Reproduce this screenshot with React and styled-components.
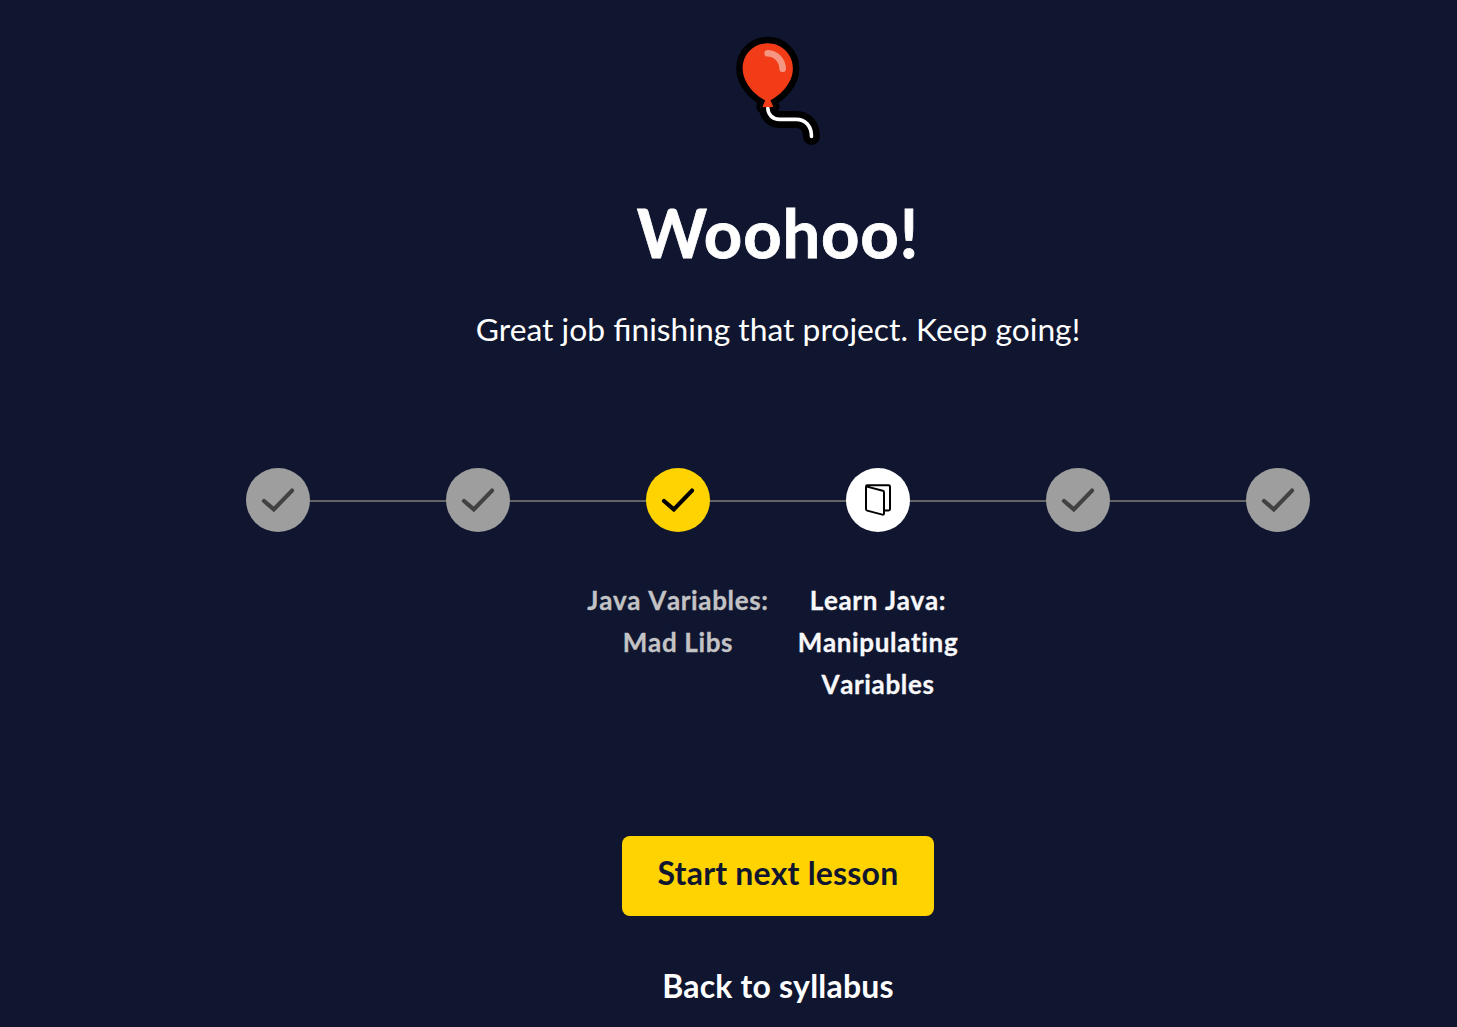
import React from "react";
import styled, { createGlobalStyle } from "styled-components";

const GlobalStyle = createGlobalStyle`
  body {
    margin: 0;
    background: #10162f;
    overflow: hidden;
  }
  * {
    box-sizing: border-box;
  }
`;

const Page = styled.main`
  display: flex;
  flex-direction: column;
  align-items: center;
  width: 1457px;
  height: 1027px;
  padding: 33px 0 0 99px;
  overflow: hidden;
  background: #10162f;
  color: #fff;
  font-family: Lato, "Open Sans", sans-serif;
`;

const Balloon = styled.svg`
  display: block;
  flex: none;
  width: 92px;
  height: 116px;
`;

const Title = styled.h1`
  margin: 43px 0 0;
  font-size: 67px;
  line-height: 80px;
  font-weight: 700;
  letter-spacing: 0.8px;
  -webkit-text-stroke: 0.8px #fff;
  white-space: nowrap;
`;

const Message = styled.p`
  margin: 33px 0 0;
  font-size: 31.8px;
  line-height: 48px;
  white-space: nowrap;
`;

const Steps = styled.ol`
  display: flex;
  margin: 115px 0 0;
  padding: 0;
  list-style: none;
`;

const Step = styled.li`
  display: flex;
  flex-direction: column;
  align-items: center;
  width: 200px;
  height: 240px;
`;

const Track = styled.div`
  display: flex;
  align-items: center;
  width: 100%;
`;

const Line = styled.span`
  flex: 1;
  height: 2px;
  margin-top: 2px;
  background: ${({ $hidden }) => ($hidden ? "transparent" : "#646466")};
`;

const discColors = { done: "#9e9e9e", current: "#ffd300", next: "#ffffff" };

const Disc = styled.span`
  display: flex;
  align-items: center;
  justify-content: center;
  width: 64px;
  height: 64px;
  border-radius: 50%;
  background: ${({ $state }) => discColors[$state]};
  color: ${({ $state }) => ($state === "done" ? "#424242" : "#000")};
`;

const Glyph = styled.svg`
  display: block;
  width: 36px;
  height: 36px;
`;

const Label = styled.span`
  margin-top: 47px;
  font-size: 26px;
  line-height: 42px;
  font-weight: 700;
  font-kerning: none;
  letter-spacing: 0.65px;
  -webkit-text-stroke: 0.3px;
  text-align: center;
  white-space: pre-line;
  color: ${({ $muted }) => ($muted ? "#c3c3c6" : "#f8f8fb")};
`;

const StartButton = styled.button`
  flex: none;
  width: 312px;
  height: 80px;
  margin-top: 128px;
  padding: 0 0 6px;
  border: 0;
  border-radius: 8px;
  background: #ffd300;
  color: #10162f;
  font: 700 32px/48px Lato, "Open Sans", sans-serif;
  letter-spacing: 0.2px;
  white-space: nowrap;
`;

const BackLink = styled.a`
  margin-top: 46px;
  font-size: 32px;
  line-height: 48px;
  font-weight: 700;
  letter-spacing: 0.2px;
  white-space: nowrap;
`;

const steps = [
  { state: "done" },
  { state: "done" },
  { state: "current", label: "Java Variables:\nMad Libs" },
  { state: "next", label: "Learn Java:\nManipulating\nVariables" },
  { state: "done" },
  { state: "done" },
];

const balloonShape =
  "M35.7 10.3C21.6 10.3 10.7 21.4 10.7 35.4C10.7 49.5 22.5 61.8 33.2 67.3L32.2 70L30.8 73.8H41L38.4 67.3C49 61.8 60.9 49.5 60.9 35.4C60.9 21.4 49.8 10.3 35.7 10.3Z";
const stringShape = "M35.8 75C36 81.5 40.5 86.4 47.5 86.4H64C73.5 86.4 79.5 93 79.5 103.5";

function BalloonArt() {
  return (
    <Balloon viewBox="0 0 92 116" fill="none" aria-hidden="true">
      <path d={stringShape} stroke="#000" strokeWidth="17" strokeLinecap="round" />
      <path d={balloonShape} fill="#000" stroke="#000" strokeWidth="13" strokeLinejoin="round" />
      <path d={balloonShape} fill="#f23c18" />
      <path d={stringShape} stroke="#fff" strokeWidth="3.6" strokeLinecap="round" />
      <path
        d="M32 71.5L34 67.5H37.5L39.7 71.5L40.5 73.6H31Z"
        fill="#f23c18"
        stroke="#f23c18"
        strokeWidth="1"
        strokeLinejoin="round"
      />
      <path d="M35.7 20.3C44 20.5 50.2 27 50.7 35.7" stroke="#f59683" strokeWidth="6.6" strokeLinecap="round" />
    </Balloon>
  );
}

function CheckIcon() {
  return (
    <Glyph viewBox="0 0 36 36" fill="none" aria-hidden="true">
      <path
        d="M4 19L13.8 27.4L32 8.6"
        stroke="currentColor"
        strokeWidth="4.2"
        strokeLinecap="round"
      />
    </Glyph>
  );
}

function BookIcon() {
  return (
    <Glyph viewBox="0 0 36 36" fill="none" stroke="currentColor" strokeWidth="2" strokeLinejoin="round" aria-hidden="true">
      <path d="M6 4.4L22.8 8.8Q24 9.1 24 10.3V31.3Q24 33 22.4 32.6L7.2 28.6Q6 28.2 6 27V4.7Q6 3.3 7.4 3.3H28.6Q30 3.3 30 4.7V27Q30 28.4 28.6 28.4H24" />
    </Glyph>
  );
}

export default function App() {
  return (
    <>
      <GlobalStyle />
      <Page>
        <BalloonArt />
        <Title>Woohoo!</Title>
        <Message>Great job finishing that project. Keep going!</Message>
        <Steps>
          {steps.map(({ state, label }, i) => (
            <Step key={i}>
              <Track>
                <Line $hidden={i === 0} />
                <Disc $state={state}>{state === "next" ? <BookIcon /> : <CheckIcon />}</Disc>
                <Line $hidden={i === steps.length - 1} />
              </Track>
              {label && <Label $muted={state === "current"}>{label}</Label>}
            </Step>
          ))}
        </Steps>
        <StartButton type="button">Start next lesson</StartButton>
        <BackLink>Back to syllabus</BackLink>
      </Page>
    </>
  );
}
